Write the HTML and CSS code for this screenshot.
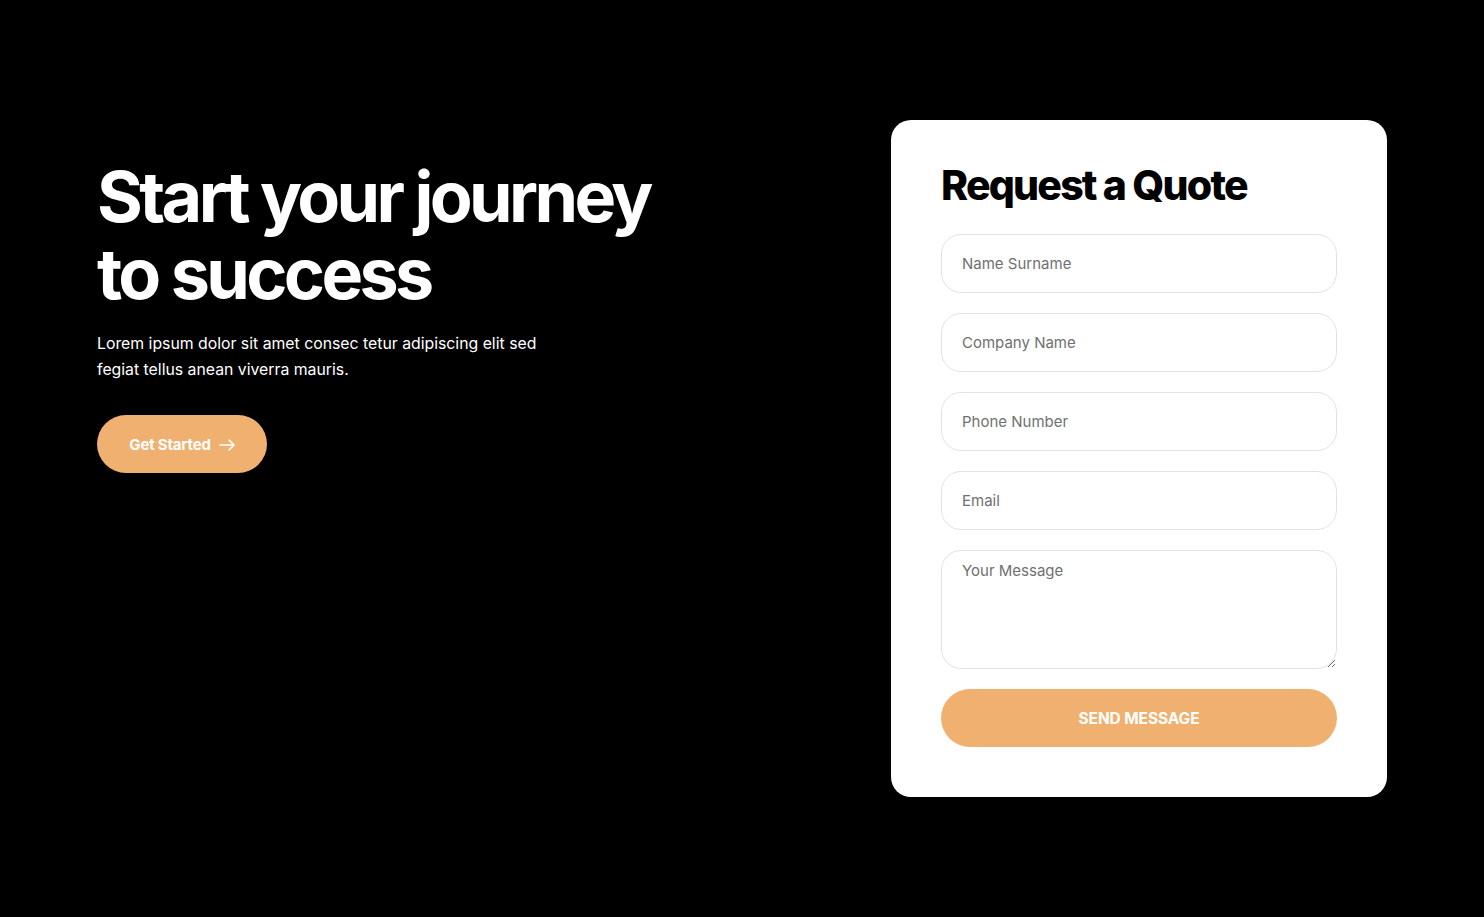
FILE: index.html
```html
<!DOCTYPE html>
<html lang="en">
<head>
<meta charset="utf-8">
<title>Request a Quote</title>
<link rel="stylesheet" href="styles.css">
</head>
<body>
<main class="hero">
  <section class="intro">
    <h1 class="intro-title">Start your journey to success</h1>
    <p class="intro-text">Lorem ipsum dolor sit amet consec tetur adipiscing elit sed fegiat tellus anean viverra mauris.</p>
    <a class="btn-start" href="#">Get Started
      <svg class="arrow" width="16" height="12" viewBox="0 0 16 12" fill="none" stroke="#fff" stroke-width="1.6" stroke-linecap="round" stroke-linejoin="round"><path d="M1 6h14M10 1l5 5-5 5"/></svg>
    </a>
  </section>
  <section class="card">
    <h2 class="card-title">Request a Quote</h2>
    <form class="form">
      <input class="field" type="text" placeholder="Name Surname">
      <input class="field" type="text" placeholder="Company Name">
      <input class="field" type="text" placeholder="Phone Number">
      <input class="field" type="email" placeholder="Email">
      <textarea class="field area" placeholder="Your Message"></textarea>
      <button class="btn-send" type="button">SEND MESSAGE</button>
    </form>
  </section>
</main>
</body>
</html>
```

FILE: styles.css
```css
* { box-sizing: border-box; }
html, body { margin: 0; background: #000; }
body {
  font-family: "Inter", "Liberation Sans", sans-serif;
  color: #fff;
  min-height: 917px;
}
.hero {
  display: flex;
  justify-content: space-between;
  align-items: flex-start;
  padding: 120px 97px 0 97px;
}
.intro {
  width: 600px;
  padding-top: 38px;
}
.intro-title {
  margin: 0;
  font-size: 70px;
  line-height: 77px;
  font-weight: 700;
  letter-spacing: -3.6px;
  width: 580px;
}
.intro-text {
  margin: 19px 0 0;
  font-size: 15.8px;
  line-height: 26px;
  width: 460px;
  font-weight: 400;
}
.btn-start {
  margin-top: 32px;
  display: inline-flex;
  align-items: center;
  justify-content: center;
  gap: 8px;
  width: 170px;
  height: 58px;
  border-radius: 29px;
  background: #f0b170;
  color: #fff;
  text-decoration: none;
  font-weight: 700;
  font-size: 15px;
  letter-spacing: -0.2px;
}
.arrow { margin-top: 1px; }
.card {
  width: 496px;
  background: #fff;
  border-radius: 20px;
  padding: 41px 50px 50px;
}
.card-title {
  margin: 0 0 25px;
  color: #000;
  font-size: 41px;
  line-height: 48px;
  font-weight: 800;
  letter-spacing: -1.8px;
}
.form {
  display: flex;
  flex-direction: column;
  gap: 20px;
}
.field {
  display: block;
  width: 100%;
  height: 59px;
  border: 1px solid #e2e2e2;
  border-radius: 20px;
  padding: 0 20px;
  font-family: "Inter", "Liberation Sans", sans-serif;
  font-size: 15px;
  color: #333;
  background: #fff;
  outline: none;
}
.field::placeholder { color: #707070; }
.area {
  height: 119px;
  padding: 11px 20px;
  resize: vertical;
  line-height: 18px;
}
.btn-send {
  height: 58px;
  border: 0;
  border-radius: 29px;
  background: #f0b170;
  color: #fff;
  font-family: "Inter", "Liberation Sans", sans-serif;
  font-weight: 700;
  font-size: 15.5px;
  letter-spacing: -0.1px;
  cursor: pointer;
}
```
